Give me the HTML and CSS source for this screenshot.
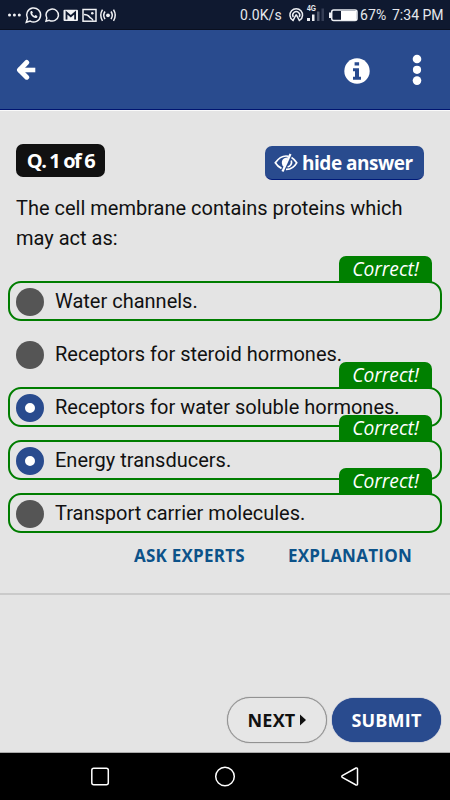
FILE: index.html
```html
<!DOCTYPE html>
<html lang="en">
<head>
  <meta charset="UTF-8">
  <meta name="viewport" content="width=device-width, initial-scale=1.0">
  <link rel="stylesheet" href="styles.css">
  <title>Quiz</title>
</head>
<body>
  <div class="status-bar">
    <svg class="status-icons" width="120" height="30" viewBox="0 0 120 30" fill="none" stroke="#f0f1f4" stroke-width="1.5">
      <g fill="#f0f1f4" stroke="none">
        <circle cx="9.5" cy="15" r="1.5"/><circle cx="14.4" cy="15" r="1.5"/><circle cx="19.3" cy="15" r="1.5"/>
      </g>
      <path d="M26.3 22.3l1.2-3.9a7 7 0 1 1 2.7 2.7z"/>
      <path d="M30.7 11.3c-1.8 2.6 3.3 8.2 6.2 6.4.8-.6.7-1.6 0-2l-1.4-.6-1 1c-1-.5-1.9-1.3-2.4-2.3l.8-1-.7-1.5c-.3-.5-1-.5-1.5 0z" fill="#f0f1f4" stroke="none"/>
      <path d="M46 21.2l.8-3.100a6.300 6 0 1 1 2.400 2.200z"/>
      <rect x="63.5" y="9.8" width="14.5" height="11.3" rx="1" fill="#f0f1f4" stroke="none"/>
      <path d="M66.5 19.5v-7l4.3 3.700 4.300-3.700v7" stroke="#0f1930" stroke-width="1.8"/>
      <rect x="83" y="9.5" width="13" height="11.7"/>
      <path d="M84 14.5c3 0 4.500 1 5.500 2.500s2.500 1 3.500 3.500"/>
      <circle cx="92.3" cy="13.3" r="1.3" fill="#f0f1f4" stroke="none"/>
      <circle cx="108" cy="15.3" r="1.9" fill="#f0f1f4" stroke="none"/>
      <path d="M105 11.500q-2.600 3.800 0 7.600M111 11.500q2.600 3.800 0 7.600M102.500 9.700q-3.500 5.600 0 11.200M113.500 9.700q3.500 5.600 0 11.200"/>
    </svg>
    <span class="speed">0.0K/s</span>
    <svg class="signal-icons" width="72" height="30" viewBox="0 0 72 30" fill="none" stroke="#eceef2" stroke-width="1.5">
      <path d="M4.500 20a6.300 6.300 0 1 1 7.500 0M5.300 17a3.500 3.500 0 1 1 5.900 0M8.200 14.500l-3.500 6.700M8.200 14.500l3.500 6.700"/>
      <text x="19" y="11" class="network" textLength="9" lengthAdjust="spacingAndGlyphs">4G</text>
      <g stroke="none" fill="#eceef2">
        <rect x="19" y="18" width="3" height="3"/>
        <rect x="24" y="14.5" width="2.5" height="6.5"/>
        <rect x="29" y="11.5" width="2.5" height="9.5" fill="#525a6e"/>
        <rect x="33.5" y="8.5" width="2.5" height="12.5" fill="#343d54"/>
      </g>
      <rect x="43.7" y="10" width="25.3" height="10.5" rx="2"/>
      <rect x="53" y="11" width="15.5" height="9" fill="#fff" stroke="none"/>
      <path d="M42 12.500v5.500" stroke-width="2"/>
    </svg>
    <span class="battery">67%</span>
    <span class="clock">7:34 PM</span>
  </div>

  <header class="app-bar">
    <svg class="back" width="20" height="22" viewBox="0 0 20 22" fill="none" stroke="#fff" stroke-width="5" stroke-linecap="round" stroke-linejoin="round">
      <path d="M10.700 3.500L3.500 11l7.200 7.200"/><path d="M4.500 11h12.500" stroke-linecap="square" stroke-width="4.6"/>
    </svg>
    <svg class="info" width="26" height="26" viewBox="0 0 26 26">
      <circle cx="13" cy="13" r="12.7" fill="#fff"/>
      <path d="M10.600 4.200h4.500v3.300h-4.500zM9 10.200h6v8.500h2v3H9v-3h2v-5.500H9z" fill="#294b8e"/>
    </svg>
    <svg class="more" width="10" height="32" viewBox="0 0 10 32" fill="#fff">
      <circle cx="5" cy="5" r="4.3"/><circle cx="5" cy="15.8" r="4.1"/><circle cx="5" cy="26.6" r="4.3"/>
    </svg>
  </header>

  <main class="quiz">
    <div class="toolbar">
      <span class="counter">Q. 1 of 6</span>
      <button class="hide-answer">
        <svg width="24" height="20" viewBox="0 0 24 20" fill="none" stroke="#fff" stroke-width="1.7">
          <path d="M14.500 3.300C8 1.800 4 6 1.300 9.800c1.500 2.400 3.500 4.400 6.200 5.600M17.500 4.500c2.200 1.300 3.900 3.200 5.200 5.300-2.200 3.900-6 6.700-10.700 6.500"/>
          <path d="M16.500 1L8.500 18.500" stroke-width="2.2"/>
          <path d="M14 4.500C9 4 6.500 8 8.500 12.500l1.500 1.500z" fill="#fff" stroke="none"/>
          <path d="M17.300 7.500c1 3-.8 5.700-3.700 6.500"/>
        </svg>
        <span>hide answer</span>
      </button>
    </div>

    <p class="question">The cell membrane contains proteins which<br>may act as:</p>

    <ul class="options">
      <li class="option correct"><span class="radio"></span><span class="label">Water channels.</span><em class="tag">Correct!</em></li>
      <li class="option"><span class="radio"></span><span class="label">Receptors for steroid hormones.</span></li>
      <li class="option correct"><span class="radio selected"></span><span class="label">Receptors for water soluble hormones.</span><em class="tag">Correct!</em></li>
      <li class="option correct"><span class="radio selected"></span><span class="label">Energy transducers.</span><em class="tag">Correct!</em></li>
      <li class="option correct"><span class="radio"></span><span class="label">Transport carrier molecules.</span><em class="tag">Correct!</em></li>
    </ul>

    <div class="links">
      <a class="ask">ASK EXPERTS</a>
      <a class="explanation">EXPLANATION</a>
    </div>
  </main>

  <footer class="actions">
    <button class="next"><span>NEXT</span><svg width="6" height="12" viewBox="0 0 6 12"><path d="M0 .5L6 6 0 11.500z" fill="#111"/></svg></button>
    <button class="submit">SUBMIT</button>
  </footer>

  <nav class="nav-bar">
    <svg width="20" height="20" viewBox="0 0 20 20"><rect x="1.8" y="1.3" width="16.5" height="16.5" rx="2"/></svg>
    <svg width="22" height="22" viewBox="0 0 22 22"><circle cx="11" cy="10.5" r="9.3"/></svg>
    <svg width="20" height="20" viewBox="0 0 20 20"><path d="M16 1L2.300 8.700q-1 .8 0 1.600L16 18q1.500.5 1.500-1V2q0-1.500-1.500-1z"/></svg>
  </nav>
</body>
</html>
```
FILE: styles.css
```css
* {
  box-sizing: border-box;
}

body {
  display: flex;
  flex-direction: column;
  width: 450px;
  height: 800px;
  margin: 0;
  overflow: hidden;
  background-color: #e4e4e4;
  color: #111;
  font-family: Roboto, sans-serif;
}

button {
  border: 0;
  padding: 0;
}

svg {
  display: block;
  flex: none;
}

.status-bar {
  display: flex;
  align-items: center;
  height: 30px;
  background-color: #0f1930;
  border-bottom: 1px solid #0a1020;
  color: #e6e8ed;
  font-size: 14px;
  line-height: 30px;
  white-space: nowrap;
}

.speed {
  width: 48px;
  margin-left: 120px;
  letter-spacing: 0.1px;
}

.network {
  fill: #eceef2;
  stroke: none;
  font: bold 8.5px "Liberation Sans", sans-serif;
}

.battery {
  width: 32px;
  letter-spacing: 0.1px;
}

.app-bar {
  display: flex;
  align-items: center;
  height: 80px;
  padding: 0 28px 0 16px;
  background-color: #294b8e;
  border-bottom: 1px solid #001470;
}

.back {
  margin-right: auto;
}

.info {
  margin-top: 2px;
}

.more {
  margin-left: 42px;
}

.quiz {
  height: 485px;
  border-top: 1px solid #fafafa;
  border-bottom: 2px solid #cacaca;
}

.toolbar {
  display: flex;
  justify-content: space-between;
  padding: 33px 26px 0 16px;
  font-family: "Open Sans", sans-serif;
  font-weight: bold;
  color: #fff;
}

.counter {
  width: 89px;
  height: 33px;
  border-radius: 7px;
  background-color: #111;
  font-size: 20px;
  line-height: 33px;
  letter-spacing: -1.4px;
  text-align: center;
}

.hide-answer {
  display: flex;
  align-items: center;
  gap: 4px;
  width: 159px;
  height: 34px;
  margin-top: 2px;
  padding-left: 9px;
  border-radius: 7px;
  background-color: #294b8e;
  border-bottom: 1px solid #001a78;
  color: #fff;
  font: bold 20px/32px "Open Sans", sans-serif;
  letter-spacing: -0.5px;
  white-space: nowrap;
}

.hide-answer span {
  transform: scaleX(0.95);
  transform-origin: left;
}

.question {
  margin: 13px 16px 0;
  font-size: 20px;
  line-height: 30px;
  white-space: nowrap;
}

.options {
  display: grid;
  grid-auto-rows: 40px;
  gap: 13px;
  margin: 28px 8px 0;
  padding: 0;
  list-style: none;
}

.option {
  position: relative;
  display: flex;
  align-items: center;
  gap: 11px;
  border: 2px solid transparent;
  border-radius: 13px;
  padding-left: 6px;
  font-size: 20px;
}

.correct {
  border-color: #007d00;
}

.radio {
  width: 28px;
  height: 28px;
  margin-top: 2px;
  border-radius: 50%;
  background-color: #555;
}

.selected {
  background-color: #fff;
  border: 9px solid #294b8e;
}

.label {
  white-space: nowrap;
}

/* sits on the top edge of the option, over the row above */
.tag {
  position: absolute;
  right: 8px;
  bottom: 36px;
  width: 93px;
  height: 27px;
  border-radius: 7px 7px 0 0;
  background-color: #008000;
  color: #fff;
  font-family: "Open Sans", sans-serif;
  font-size: 19.2px;
  line-height: 26px;
  text-align: center;
}

.links {
  display: flex;
  justify-content: flex-end;
  gap: 43px;
  padding: 11px 38px 0 0;
  color: #0c5289;
  font: bold 17px/24px "Open Sans", sans-serif;
  letter-spacing: 0.25px;
}

.actions {
  display: flex;
  flex: 1;
  justify-content: flex-end;
  align-items: flex-end;
  gap: 5px;
  padding: 0 9px 9px 0;
  border-bottom: 1px solid #aaa;
}

.next,
.submit {
  display: flex;
  align-items: center;
  justify-content: center;
  border-radius: 24px;
  font: bold 18px/24px "Open Sans", sans-serif;
  letter-spacing: 0.2px;
}

.next {
  gap: 5px;
  width: 100px;
  height: 46px;
  border: 1px solid #929292;
  background-color: #e6e6e6;
  color: #111;
  box-shadow: 0 0 1px #888;
}

.submit {
  width: 109px;
  height: 44px;
  margin-bottom: 1px;
  background-color: #294b8e;
  color: #fff;
  box-shadow: 0 0 1px #002580;
}

.nav-bar {
  display: flex;
  justify-content: space-between;
  align-items: center;
  height: 47px;
  padding: 0 90px;
  background-color: #000;
  fill: none;
  stroke: #fff;
  stroke-width: 1.5;
}
```
